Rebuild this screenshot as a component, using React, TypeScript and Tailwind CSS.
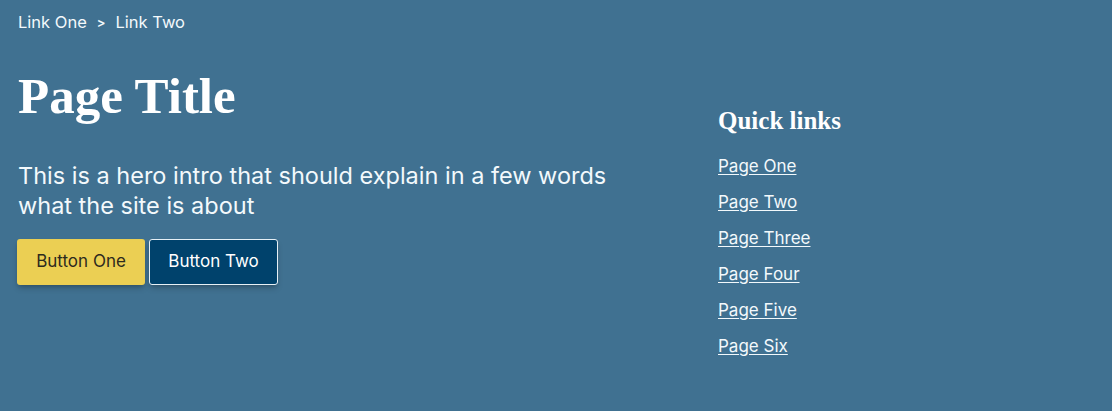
import React from 'react'

const links = ['Page One', 'Page Two', 'Page Three', 'Page Four', 'Page Five', 'Page Six']

const App = () => {
  return (
    <div className="w-[1112px] h-[411px] bg-[#407191] text-[#f3f9fc] font-['Inter',sans-serif] px-[18px] pt-[12px]">
      <nav className="flex items-center gap-[10px] text-[16.5px] leading-[20px]">
        <a href="#">Link One</a>
        <span className="text-[13px] font-semibold">&gt;</span>
        <a href="#">Link Two</a>
      </nav>

      <div className="flex">
        <div className="w-[700px]">
          <h1 className="mt-[36px] font-['Liberation_Serif',serif] font-bold text-[51px] leading-[56px] text-white">
            Page Title
          </h1>
          <p className="mt-[37px] w-[620px] text-[23.5px] leading-[30px]">
            This is a hero intro that should explain in a few words what the site is about
          </p>
          <div className="mt-[18px] -ml-px flex gap-[4px]">
            <button className="w-[128px] h-[46px] rounded-[3px] bg-[#ebcf53] text-[#2d2a1e] text-[17px] shadow-md shadow-black/20">
              Button One
            </button>
            <button className="w-[129px] h-[46px] rounded-[3px] bg-[#00426c] border border-[#e6f0f6] text-white text-[17px] shadow-md shadow-black/20">
              Button Two
            </button>
          </div>
        </div>

        <aside className="pt-[74px]">
          <h2 className="font-['Liberation_Serif',serif] font-bold text-[25px] leading-[30px] text-white">
            Quick links
          </h2>
          <ul className="mt-[20px] flex flex-col gap-[16px] text-[17px] leading-[20px]">
            {links.map(l => (
              <li key={l}>
                <a href="#" className="underline underline-offset-2">{l}</a>
              </li>
            ))}
          </ul>
        </aside>
      </div>
    </div>
  )
}

export default App
